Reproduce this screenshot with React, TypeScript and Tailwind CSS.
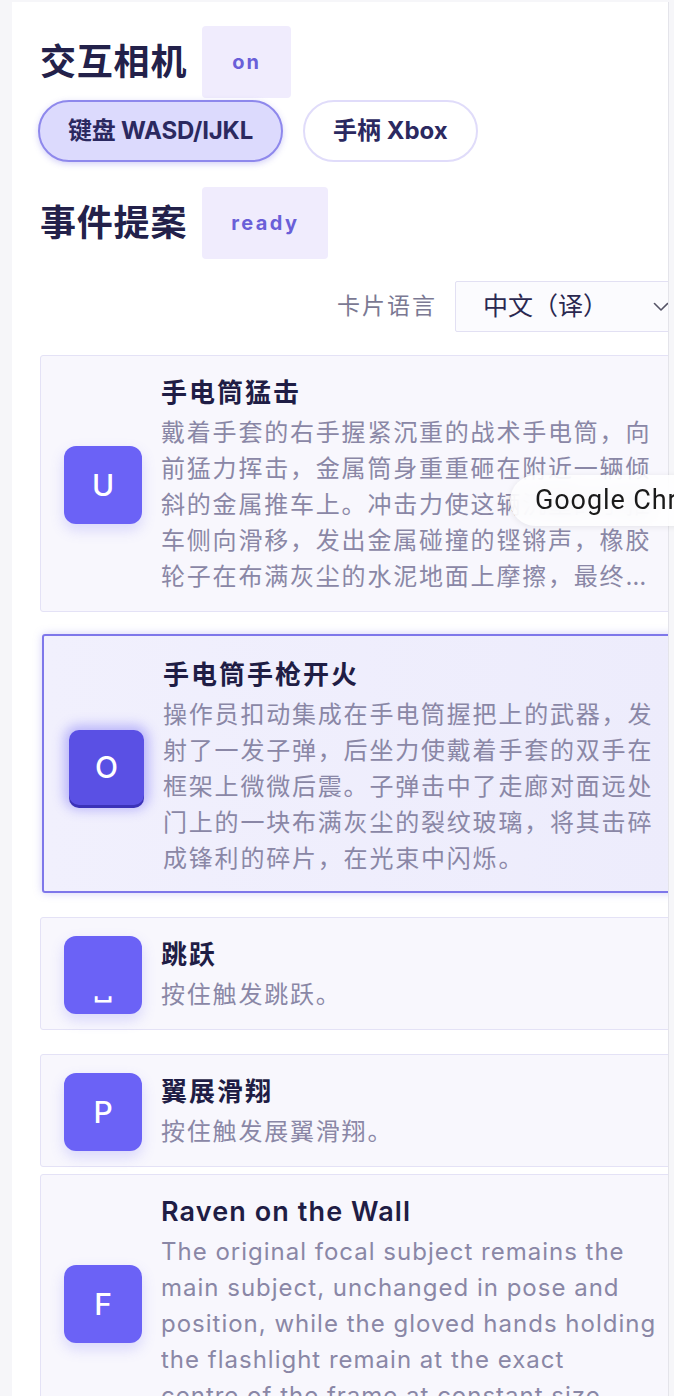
import React from "react";

type Card = {
  key: string;
  title: string;
  desc: React.ReactNode;
  selected?: boolean;
  short?: boolean;
  latin?: boolean;
  mt: string;
};

const cards: Card[] = [
  {
    key: "U",
    title: "手电筒猛击",
    desc: "戴着手套的右手握紧沉重的战术手电筒，向前猛力挥击，金属筒身重重砸在附近一辆倾斜的金属推车上。冲击力使这辆沉重的手推车侧向滑移，发出金属碰撞的铿锵声，橡胶轮子在布满灰尘的水泥地面上摩擦，最终停在墙边，发出一声闷响。",
    mt: "mt-0",
  },
  {
    key: "O",
    title: "手电筒手枪开火",
    desc: "操作员扣动集成在手电筒握把上的武器，发射了一发子弹，后坐力使戴着手套的双手在框架上微微后震。子弹击中了走廊对面远处门上的一块布满灰尘的裂纹玻璃，将其击碎成锋利的碎片，在光束中闪烁。",
    selected: true,
    mt: "mt-[22px]",
  },
  {
    key: "␣",
    title: "跳跃",
    desc: "按住触发跳跃。",
    short: true,
    mt: "mt-[24px]",
  },
  {
    key: "P",
    title: "翼展滑翔",
    desc: "按住触发展翼滑翔。",
    short: true,
    mt: "mt-[24px]",
  },
  {
    key: "F",
    title: "Raven on the Wall",
    latin: true,
    desc: (
      <>
        The original focal subject remains the main subject, unchanged in pose and position, while the gloved hands
        holding the flashlight remain at the exact
        <br />
        centre of the frame at constant size, and the beam continues to light the wall behind the raven.
      </>
    ),
    mt: "mt-[7px]",
  },
];

function KeyBadge({ k, selected }: { k: string; selected?: boolean }) {
  if (selected) {
    return (
      <div className="shrink-0 ml-[2px] w-[75px] h-[75px] rounded-[10px] bg-[#5a50e4] flex items-center justify-center text-white text-[30px] font-medium shadow-[0_3px_0_#3b32b8,0_0_12px_5px_rgba(120,110,248,0.45)]">
        {k}
      </div>
    );
  }
  return (
    <div
      className={
        "shrink-0 w-[78px] h-[78px] rounded-[12px] bg-[#6b62f6] flex justify-center text-white font-medium shadow-[0_6px_14px_rgba(107,98,246,0.22)] " +
        (k === "␣" ? "items-end pb-[12px] text-[28px] leading-none font-bold" : "items-center text-[30px]")
      }
    >
      {k}
    </div>
  );
}

function EventCard({ c }: { c: Card }) {
  let box: string;
  if (c.selected) {
    box =
      "ml-[2px] border-2 border-[#7e77ea] pt-[21px] pb-[14px] bg-gradient-to-r from-[#f1f0fd] to-[#edecfc] shadow-[0_0_8px_rgba(126,119,234,0.35)]";
  } else if (c.short) {
    box = "border border-[#e4e2f6] pt-[18px] pb-[15px] bg-[#f8f7fd]";
  } else {
    box = "border border-[#e4e2f6] pt-[19px] pb-[16px] bg-[#f8f7fd]";
  }
  return (
    <div className={c.mt + " flex items-center gap-[19px] pl-[23px] pr-[24px] rounded-[3px] " + box}>
      <KeyBadge k={c.key} selected={c.selected} />
      <div className="flex-1 min-w-0">
        <div
          className={
            "text-[#1f1d45] leading-[36px] " +
            (c.latin ? "text-[27px] font-semibold tracking-[1.1px]" : "text-[26px] font-bold tracking-[2px]")
          }
        >
          {c.title}
        </div>
        <div
          className={
            "mt-[4px] text-[#8a87a6] leading-[36px] line-clamp-5 " +
            (c.latin ? "text-[24px] tracking-[1px]" : "text-[24px] tracking-[1.8px]")
          }
        >
          {c.desc}
        </div>
      </div>
    </div>
  );
}

export default function App() {
  return (
    <div className="relative w-[674px] h-[1396px] overflow-hidden bg-[#f6f6f9] pt-[2px] pl-[12px] font-[Inter,'Noto_Sans_CJK_SC',sans-serif]">
      <div className="w-[657px] h-[1394px] bg-white border-r border-[#e4e4ea] overflow-hidden">
        <div className="w-[672px] pl-[28px] pt-[24px]">
          {/* header 1 */}
          <div className="flex items-center gap-[15px]">
            <div className="text-[36px] font-bold text-[#23214a] tracking-[0.8px] leading-none">交互相机</div>
            <div className="h-[72px] w-[89px] rounded-[4px] bg-[#f0ecfd] flex items-center justify-center text-[20px] font-bold text-[#6a5fd8] tracking-[2px]">
              on
            </div>
          </div>
          {/* buttons */}
          <div className="mt-[2px] flex items-center gap-[20px]">
            <div className="-ml-[2px] h-[62px] px-[28px] rounded-full border-2 border-[#8e88ec] bg-[#dcdafd] flex items-center text-[24px] font-bold text-[#2b2960] shadow-[0_2px_6px_rgba(110,100,230,0.3)] tracking-[-0.2px]">
              键盘 WASD/IJKL
            </div>
            <div className="h-[62px] px-[28px] rounded-full border-2 border-[#e0dcfa] bg-white flex items-center text-[24px] font-bold text-[#2b2960]">
              手柄 Xbox
            </div>
          </div>
          {/* header 2 */}
          <div className="mt-[25px] flex items-center gap-[15px]">
            <div className="text-[36px] font-bold text-[#23214a] tracking-[0.8px] leading-none">事件提案</div>
            <div className="h-[72px] px-[29px] rounded-[4px] bg-[#f0ecfd] flex items-center justify-center text-[20px] font-bold text-[#6a5fd8] tracking-[2.4px]">
              ready
            </div>
          </div>
          {/* language select */}
          <div className="mt-[22px] w-[644px] flex items-center justify-end gap-[18px]">
            <div className="text-[23px] text-[#7b7993] tracking-[2px]">卡片语言</div>
            <div className="w-[229px] h-[51px] border border-[#e2e0f3] bg-[#fbfbfe] rounded-[2px] flex items-center justify-between pl-[27px] pr-[14px]">
              <span className="text-[25px] text-[#2a2850]">中文（译）</span>
              <svg width="16" height="10" viewBox="0 0 16 10" fill="none">
                <path d="M1.5 1.5 L8 8 L14.5 1.5" stroke="#555466" strokeWidth="1.6" strokeLinecap="round" strokeLinejoin="round" />
              </svg>
            </div>
          </div>
          {/* cards */}
          <div className="mt-[23px] w-[644px] flex flex-col">
            {cards.map((c) => (
              <EventCard key={c.title} c={c} />
            ))}
          </div>
        </div>
      </div>
      {/* browser tooltip overlay */}
      <div className="absolute left-[510px] top-[475px] h-[51px] pl-[25px] pr-[30px] rounded-full bg-white/85 backdrop-blur-md shadow-[0_1px_6px_rgba(0,0,0,0.08)] flex items-center whitespace-nowrap text-[27px] tracking-[0.9px] text-[#1a1a1a] font-['Roboto',sans-serif]">
        Google Chrome
      </div>
    </div>
  );
}
